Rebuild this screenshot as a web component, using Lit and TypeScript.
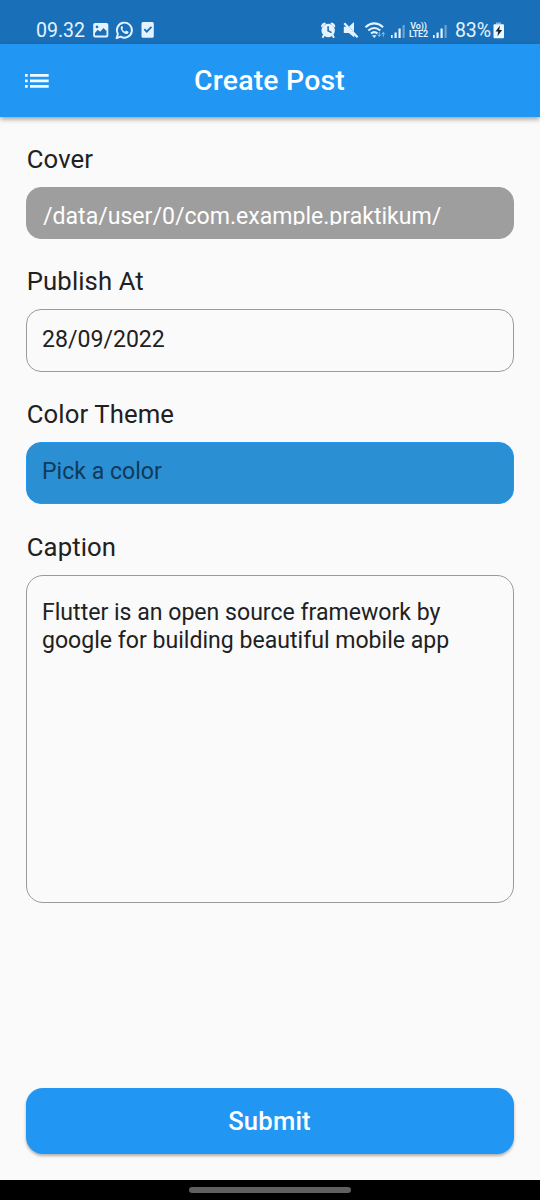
import { LitElement, html, css } from "lit";
import { customElement, property } from "lit/decorators.js";

@customElement("status-bar")
class StatusBar extends LitElement {
  static styles = css`
    :host {
      display: flex;
      box-sizing: border-box;
      height: 44px;
      padding: 17px 36px 0 36px;
      background: #1a70b8;
      color: #e4f3ff;
      font-size: 19.500px;
      line-height: 28px;
      justify-content: space-between;
    }
    .group { display: flex; height: 26px; }
    .icons { display: block; height: 26px; }
    .volte {
      width: 21px;
      margin: 5px 4px 0 3px;
      font-size: 9px;
      line-height: 8px;
      font-weight: 600;
      letter-spacing: -0.150px;
      text-align: center;
      white-space: nowrap;
    }
    .percent { margin-left: 8px; margin-right: 2px; width: 36px; white-space: nowrap; letter-spacing: -0.1px; }
  `;

  private bars(width: number) {
    return html`<svg class="icons" width=${width} height="26" viewBox="0.5 0 ${width} 26" fill="#e4f3ff">
      <path d="M0 18h2.200v3H0zM4 15.500h2.200V21H4zM8 11.500h2.200V21H8z" />
      <path d="M12 8h2.200v13h-2.200z" opacity=".4" />
    </svg>`;
  }

  render() {
    return html`
      <div class="group">
        <span>09.32</span>
        <svg class="icons" width="70" height="26" viewBox="85 17 70 26" fill="#e4f3ff">
          <path fill-rule="evenodd" d="M95 23h11.500q1.800 0 1.800 1.800v11q0 1.800-1.800 1.800H95q-1.800 0-1.800-1.800v-11Q93.200 23 95 23zM95 35.500h11.500v-4.500l-3-3-3.300 3.700-2.500-2L95 33zM97 25.500a1.400 1.400 0 1 0 .01 0z" />
          <path d="M116.600 38.200l1.300-4.300a7.500 7.500 0 1 1 2.800 2.800z" fill="none" stroke="#e4f3ff" stroke-width="1.900" stroke-linejoin="round" />
          <path d="M121.500 26.300c-1.500 1-.9 3.500 1.200 5.600 2.200 2.200 4.900 2.900 5.700 1.100.5-1.200-.2-1.400-1.900-2.200-.8-.3-1 .9-1.700.7-1-.3-2-1.400-2.400-2.300-.2-.6.9-.9.600-1.700-.6-1.300-.8-1.700-1.500-1.200z" />
          <path fill-rule="evenodd" d="M143 22h9.300q1.500 0 1.500 1.500v12.800q0 1.500-1.500 1.500H143q-1.500 0-1.500-1.500V23.500Q141.500 22 143 22zM144.900 28.400l-1.300 1.300 3.200 3.200 5.300-5.300-1.300-1.300-4 4z" />
        </svg>
      </div>
      <div class="group">
        <svg class="icons" width="70" height="26" viewBox="320.500 17 70 26" fill="#e4f3ff">
          <path d="M320.500 26.500q.4-3.300 4-3.900l1 .8-4.300 4zM334.800 26.500q-.4-3.300-4-3.900l-1 .8 4.300 4z" />
          <path fill-rule="evenodd" d="M327.700 23.800a6.700 6.700 0 1 1-.01 0zM326.800 26.300v4.900l3.900 2 .7-1.300-3-1.600v-4z" />
          <path d="M323.500 35l-1.500 2.700M332 35l1.500 2.700" stroke="#e4f3ff" stroke-width="2" />
          <path d="M343.300 26.800h3l7.500 7.800V37.500l-5.500-4.500h-5zM348.500 26.500l5-4.500v9.800z" />
          <path d="M343.800 23.200l13.300 14" stroke="#e4f3ff" stroke-width="2.200" />
          <g fill="none" stroke="#e4f3ff" stroke-width="2.100">
            <path d="M365 27.200q8.800-7.500 17.600 0" />
            <path d="M367.800 30.500q6-5 12 0" />
            <path d="M370.500 33.500q3.300-2.600 6.500 0" />
          </g>
          <path d="M371.500 35.200h4.500L373.800 38z" />
          <path d="M378.800 32v4M377.200 34.600l1.600 1.900 1.600-1.900M382.800 36.700v-4M381.200 34.400l1.600-1.900 1.600 1.900" fill="none" stroke="#e4f3ff" stroke-width="1" opacity=".55" />
        </svg>
        ${this.bars(14)}
        <div class="volte">Vo))<br />LTE2</div>
        ${this.bars(14)}
        <span class="percent">83%</span>
        <svg class="icons" width="11" height="26" viewBox="493 17 11 26">
          <path d="M496 22.500h5v2h-5z" fill="#89b6dc" />
          <path d="M494.500 24.200h8.500q1 0 1 1v12q0 1-1 1h-8.500q-1 0-1-1v-12q0-1 1-1z" fill="#eef8ff" />
          <path d="M500 25.500l-4.500 6h2.700l-.8 4.700 4.800-6.300h-2.900z" fill="#172733" />
        </svg>
      </div>
    `;
  }
}

@customElement("app-header")
class AppHeader extends LitElement {
  @property() heading = "";
  static styles = css`
    :host {
      display: grid;
      grid-template-columns: 73px 1fr 73px;
      align-items: center;
      box-sizing: border-box;
      height: 73.400px;
      background: #2196f3;
      color: #fff;
      box-shadow: 0 2px 5px rgba(0, 0, 0, 0.38);
    }
    .menu { margin-left: 24px; display: block; }
    .title {
      margin: 0 1px 0 0;
      text-align: center;
      font-size: 28.400px;
      line-height: 34px;
      font-weight: 500;
      letter-spacing: 0.2px;
      white-space: nowrap;
    }
  `;
  render() {
    return html`
      <svg class="menu" width="26" height="26" viewBox="0 0 26 26" fill="#f2fbff">
        <path d="M1 6h2.700v2.700H1zM6 6h18.700v2.700H6zM1 11.500h2.700v2.700H1zM6 11.500h18.700v2.700H6zM1 17h2.700v2.700H1zM6 17h18.700v2.700H6z" />
      </svg>
      <h1 class="title">${this.heading}</h1>
    `;
  }
}

@customElement("form-field")
class FormField extends LitElement {
  @property() label = "";
  @property() value = "";
  @property() variant = "outline";
  static styles = css`
    :host { display: block; }
    .label {
      padding-left: 0.8px;
      font-size: 25.700px;
      line-height: 30px;
      letter-spacing: 0.1px;
      color: #212121;
    }
    .box {
      box-sizing: border-box;
      margin-top: 13px;
      height: 62.500px;
      padding: 15.500px 15px;
      border: 1px solid #9a9a9a;
      border-radius: 15px;
      font-size: 23.080px;
      line-height: 27.500px;
      color: #212121;
    }
    .text { margin: 0; }
    .filled {
      height: 52px;
      padding: 14.500px 16px 0;
      background: #9e9e9e;
      border-color: #9e9e9e;
      color: #fff;
    }
    .filled .text { height: 22px; overflow: hidden; }
    .color { background: #2b8fd4; border-color: #2196f3; color: #103a59; }
    .area { height: 328px; padding-top: 23.500px; border-radius: 17px; }
  `;
  render() {
    return html`
      <div class="label">${this.label}</div>
      <div class="box ${this.variant}"><p class="text">${this.value}</p></div>
    `;
  }
}

@customElement("app-root")
class AppRoot extends LitElement {
  static styles = css`
    :host {
      display: flex;
      flex-direction: column;
      height: 1200px;
      background: #fafafa;
      font-family: Roboto, "Liberation Sans", sans-serif;
    }
    .form {
      flex: 1;
      display: flex;
      flex-direction: column;
      gap: 27.200px;
      padding: 26.700px 26px 26px;
    }
    .submit {
      margin-top: auto;
      height: 66px;
      padding: 0 1px 0 0;
      border: 0;
      border-radius: 17px;
      background: #2196f3;
      color: #fff;
      font: 500 25.600px/30px Roboto, "Liberation Sans", sans-serif;
      letter-spacing: 0.2px;
      box-shadow: 0 2px 3px rgba(0, 0, 0, 0.3);
    }
    .nav {
      height: 20px;
      box-sizing: border-box;
      padding-top: 7px;
      background: #000;
    }
    .handle {
      width: 162px;
      height: 6px;
      margin: 0 auto;
      border-radius: 3px;
      background: #606060;
    }
  `;
  render() {
    return html`
      <status-bar></status-bar>
      <app-header heading="Create Post"></app-header>
      <main class="form">
        <form-field label="Cover" value="/data/user/0/com.example.praktikum/" variant="filled"></form-field>
        <form-field label="Publish At" value="28/09/2022"></form-field>
        <form-field label="Color Theme" value="Pick a color" variant="color"></form-field>
        <form-field
          label="Caption"
          value="Flutter is an open source framework by google for building beautiful mobile app"
          variant="area"
        ></form-field>
        <button class="submit">Submit</button>
      </main>
      <div class="nav"><div class="handle"></div></div>
    `;
  }
}
